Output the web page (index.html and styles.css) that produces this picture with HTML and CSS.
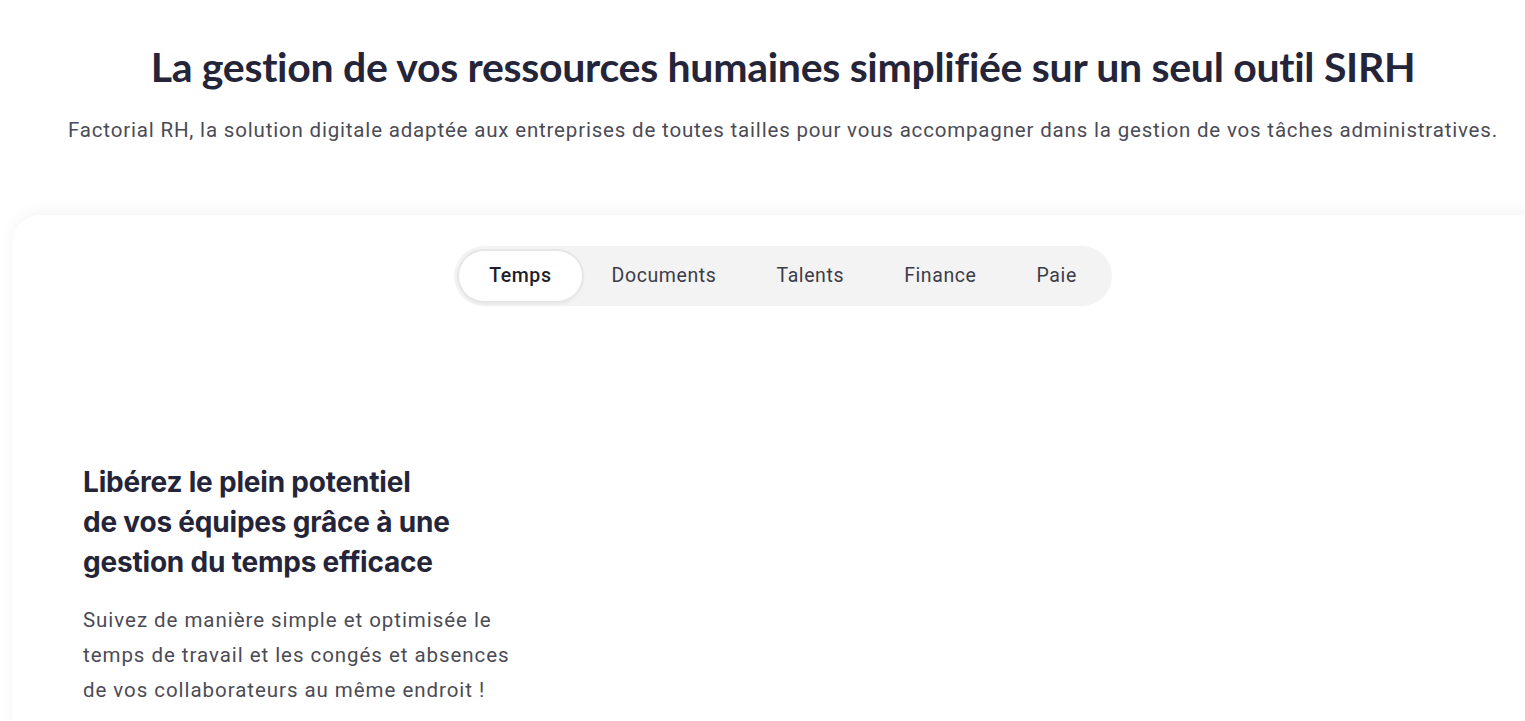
FILE: index.html
```html
<!DOCTYPE html>
<html lang="fr">
<head>
  <meta charset="UTF-8">
  <meta name="viewport" content="width=device-width, initial-scale=1.0">
  <title>Factorial RH - SIRH</title>
  <link rel="stylesheet" href="styles.css">
</head>
<body>

  <section class="hero">
    <h1>La gestion de vos ressources humaines simplifiée sur un seul outil SIRH</h1>
    <p class="subtitle">Factorial RH, la solution digitale adaptée aux entreprises de toutes tailles pour vous accompagner dans la gestion de vos tâches administratives.</p>

    <div class="card">
      <nav class="tabs">
        <a class="tab active" href="#">Temps</a>
        <a class="tab" href="#">Documents</a>
        <a class="tab" href="#">Talents</a>
        <a class="tab" href="#">Finance</a>
        <a class="tab" href="#">Paie</a>
      </nav>

      <div class="feature">
        <h2>Libérez le plein potentiel<br>de vos équipes grâce à une<br>gestion du temps efficace</h2>
        <p>Suivez de manière simple et optimisée le temps de travail et les congés et absences de vos collaborateurs au même endroit !</p>
      </div>
    </div>
  </section>

</body>
</html>
```

FILE: styles.css
```css
/* global */
html, body {
  margin: 0;
  padding: 0;
  overflow: hidden;
}

body {
  background: #fff;
  font-family: Lato, "Noto Sans", sans-serif;
  color: #25253a;
}

.hero {
  width: 1542px;
  margin-left: 12px;
  padding-top: 40px;
  text-align: center;
}

h1 {
  margin: 0;
  font-size: 41px;
  font-weight: 700;
  letter-spacing: -0.3px;
  color: #25253a;
  line-height: 54px;
}

.subtitle {
  margin: 21px 0 0;
  font-family: Roboto, "Noto Sans", sans-serif;
  font-size: 20.5px;
  letter-spacing: 0.82px;
  color: #4b4b55;
  line-height: 30px;
}

/* card */
.card {
  margin-top: 70px;
  background: #fff;
  border-radius: 28px;
  box-shadow: 0 -4px 16px rgba(0, 0, 0, 0.045);
  padding-top: 31px;
  height: 520px;
  text-align: left;
}

.tabs {
  display: flex;
  width: fit-content;
  margin: 0 auto;
  padding: 5px;
  gap: 0;
  background: #f3f3f3;
  border-radius: 30px;
}

.tab {
  display: block;
  padding: 0 30px;
  height: 50px;
  line-height: 50px;
  border-radius: 25px;
  font-family: Roboto, "Noto Sans", sans-serif;
  font-size: 19.5px;
  letter-spacing: 0.6px;
  color: #3c3c48;
  text-decoration: none;
}

.tab.active {
  background: #fff;
  color: #1f1f2c;
  font-weight: 500;
  box-shadow: 0 0 0 2px #e6e6e6, 0 2px 4px rgba(0, 0, 0, 0.08);
}

/* feature text */
.feature {
  margin-top: 156px;
  padding-left: 71px;
  width: 442px;
}

.feature h2 {
  margin: 0;
  font-family: Inter, "Noto Sans", sans-serif;
  font-size: 28px;
  font-weight: 700;
  letter-spacing: -0.2px;
  line-height: 40px;
  color: #25253a;
}

.feature p {
  margin: 21px 0 0;
  font-family: Roboto, "Noto Sans", sans-serif;
  font-size: 20.5px;
  letter-spacing: 0.95px;
  line-height: 35px;
  color: #4b4b55;
}
```
